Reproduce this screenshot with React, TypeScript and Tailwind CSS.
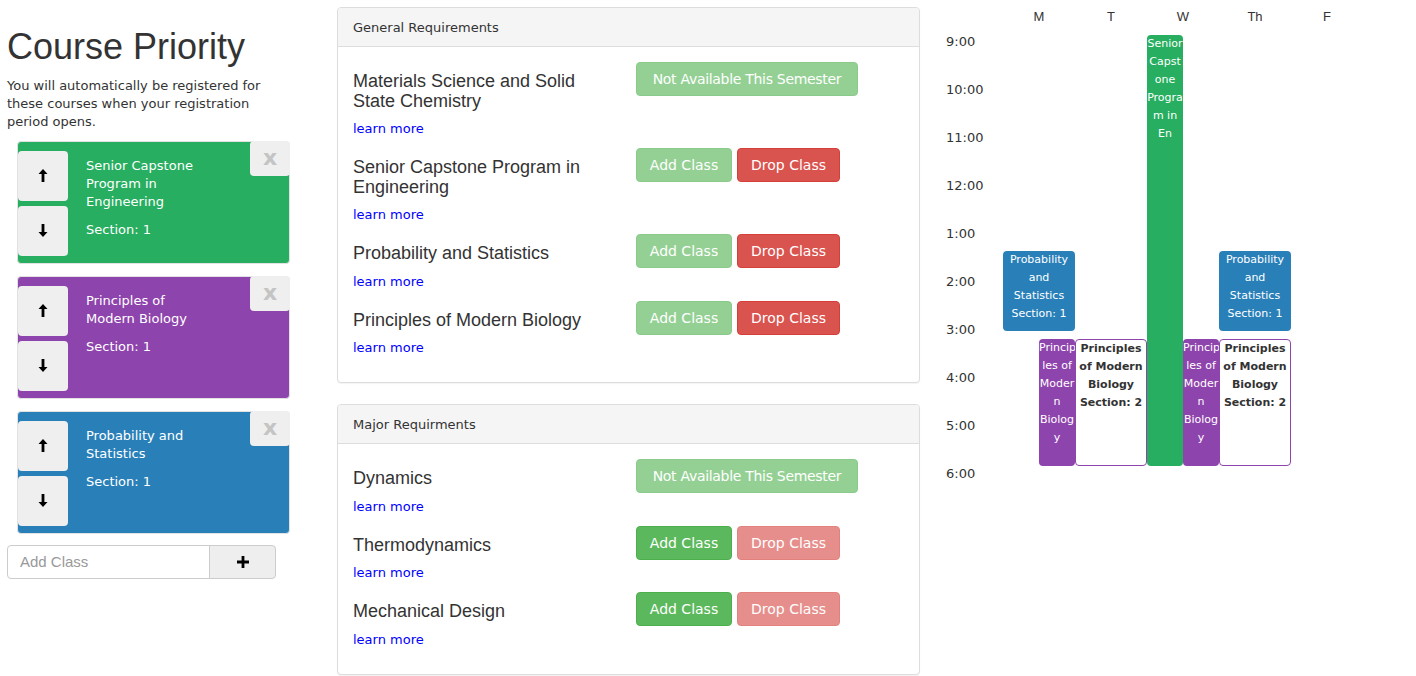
import React from "react";

const verdana = "font-['DejaVu_Sans',Verdana,sans-serif]";
const arial = "font-['Liberation_Sans',Arial,Helvetica,sans-serif]";

function ArrowUp() {
  return (
    <svg width="10" height="13" viewBox="0 0 10 13">
      <path d="M5 0 L9.5 5 H6.4 V13 H3.6 V5 H0.5 Z" fill="#000" />
    </svg>
  );
}

function ArrowDown() {
  return (
    <svg width="10" height="13" viewBox="0 0 10 13">
      <path d="M5 13 L9.5 8 H6.4 V0 H3.6 V8 H0.5 Z" fill="#000" />
    </svg>
  );
}

function PriorityCard({ bg, lines }: { bg: string; lines: string[] }) {
  return (
    <div className={"relative h-[123px] w-[273px] rounded-[4px] border border-[#e2e2e2] " + bg}>
      <div className="flex">
        <div className="flex flex-col gap-[5px] pt-[9px]">
          <button className="flex h-[50px] w-[50px] items-center justify-center rounded-[4px] bg-[#efefef]">
            <ArrowUp />
          </button>
          <button className="flex h-[50px] w-[50px] items-center justify-center rounded-[4px] bg-[#efefef]">
            <ArrowDown />
          </button>
        </div>
        <div className={"ml-[18px] w-[135px] pt-[15px] text-[13px] leading-[18px] text-white " + verdana}>
          <div>
            {lines.map((l) => (
              <div key={l}>{l}</div>
            ))}
          </div>
          <div className="mt-[10px]">Section: 1</div>
        </div>
      </div>
      <button
        className={
          "absolute -right-px -top-px flex h-[35px] w-[40px] items-center justify-center rounded-[4px] bg-[#efefef] text-[22px] font-bold leading-none text-[#c4c4c4] " +
          verdana
        }
      >
        x
      </button>
    </div>
  );
}

type Course = {
  name: string[];
  kind: "na" | "drop" | "add";
};

function Btn({ label, cls, w }: { label: string; cls: string; w: string }) {
  return (
    <button
      className={
        "h-[34px] whitespace-nowrap rounded-[4px] border px-0 text-center text-[14px] leading-[20px] text-white " +
        verdana +
        " " +
        w +
        " " +
        cls
      }
    >
      {label}
    </button>
  );
}

function CourseRow({ c }: { c: Course }) {
  return (
    <div className="flex pb-[10px]">
      <div className="w-[283px]">
        <div className={"pt-[10px] text-[18px] leading-[19.5px] text-[#333] " + arial}>
          {c.name.map((n) => (
            <div key={n}>{n}</div>
          ))}
        </div>
        <div className="mt-[9px] text-[13px] leading-[18px] text-[#0000ff]">learn more</div>
      </div>
      <div className="flex gap-[5px]">
        {c.kind === "na" && (
          <Btn
            label="Not Available This Semester"
            w="w-[222px] tracking-[-0.3px]"
            cls="border-[#4cae4c] bg-[#5cb85c] opacity-65"
          />
        )}
        {c.kind === "drop" && (
          <>
            <Btn label="Add Class" w="w-[96px]" cls="border-[#4cae4c] bg-[#5cb85c] opacity-65" />
            <Btn label="Drop Class" w="w-[103px]" cls="border-[#d43f3a] bg-[#d9534f]" />
          </>
        )}
        {c.kind === "add" && (
          <>
            <Btn label="Add Class" w="w-[96px]" cls="border-[#4cae4c] bg-[#5cb85c]" />
            <Btn label="Drop Class" w="w-[103px]" cls="border-[#d43f3a] bg-[#d9534f] opacity-65" />
          </>
        )}
      </div>
    </div>
  );
}

function Panel({ title, courses, className }: { title: string; courses: Course[]; className?: string }) {
  return (
    <div className={"rounded-[4px] border border-[#ddd] bg-white shadow-[0_1px_1px_rgba(0,0,0,0.05)] " + (className ?? "")}>
      <div className="rounded-t-[3px] border-b border-[#ddd] bg-[#f5f5f5] px-[15px] pb-[9px] pt-[11px] text-[13px] leading-[18px] text-[#333]">
        {title}
      </div>
      <div className="px-[15px] pb-[15px] pt-[15px]">
        {courses.map((c) => (
          <CourseRow key={c.name.join(" ")} c={c} />
        ))}
      </div>
    </div>
  );
}

const general: Course[] = [
  { name: ["Materials Science and Solid", "State Chemistry"], kind: "na" },
  { name: ["Senior Capstone Program in", "Engineering"], kind: "drop" },
  { name: ["Probability and Statistics"], kind: "drop" },
  { name: ["Principles of Modern Biology"], kind: "drop" },
];

const major: Course[] = [
  { name: ["Dynamics"], kind: "na" },
  { name: ["Thermodynamics"], kind: "add" },
  { name: ["Mechanical Design"], kind: "add" },
];

const days = ["M", "T", "W", "Th", "F"];
const hours = ["9:00", "10:00", "11:00", "12:00", "1:00", "2:00", "3:00", "4:00", "5:00", "6:00"];

const events = [
  {
    cls: "left-[144px] top-[2px] h-[431px] w-[36px] bg-[#27ae60] text-white",
    lines: ["Senior", "Capst", "one", "Progra", "m in", "En"],
  },
  {
    cls: "left-0 top-[218px] h-[80px] w-[72px] bg-[#2980b9] text-white",
    lines: ["Probability", "and", "Statistics", "Section: 1"],
  },
  {
    cls: "left-[216px] top-[218px] h-[80px] w-[72px] bg-[#2980b9] text-white",
    lines: ["Probability", "and", "Statistics", "Section: 1"],
  },
  {
    cls: "left-[36px] top-[306px] h-[127px] w-[36px] bg-[#8e44ad] text-white",
    lines: ["Princip", "les of", "Moder", "n", "Biolog", "y"],
  },
  {
    cls: "left-[180px] top-[306px] h-[127px] w-[36px] bg-[#8e44ad] text-white",
    lines: ["Princip", "les of", "Moder", "n", "Biolog", "y"],
  },
  {
    cls: "left-[72px] top-[306px] h-[127px] w-[72px] border border-[#8e44ad] bg-white font-bold text-[#333]",
    lines: ["Principles", "of Modern", "Biology", "Section: 2"],
  },
  {
    cls: "left-[216px] top-[306px] h-[127px] w-[72px] border border-[#8e44ad] bg-white font-bold text-[#333]",
    lines: ["Principles", "of Modern", "Biology", "Section: 2"],
  },
];

function Calendar() {
  return (
    <div className="w-[481px] pt-[8px]">
      <div className={"flex pl-[68px] text-[13px] leading-[18px] text-[#333] " + arial}>
        {days.map((d) => (
          <div key={d} className="w-[72px] text-center">
            {d}
          </div>
        ))}
      </div>
      <div className="mt-[7px] flex">
        <div className="w-[68px] pl-[11px] text-[13px] leading-[18px] text-[#333]">
          {hours.map((h) => (
            <div key={h} className="h-[48px]">
              {h}
            </div>
          ))}
        </div>
        <div className="relative h-[480px] w-[360px]">
          {events.map((e, i) => (
            <div
              key={i}
              className={"absolute overflow-hidden rounded-[4px] text-center text-[11px] leading-[18px] " + e.cls}
            >
              {e.lines.map((l, j) => (
                <div key={j} className="whitespace-nowrap">
                  {l}
                </div>
              ))}
            </div>
          ))}
        </div>
      </div>
    </div>
  );
}

export default function App() {
  return (
    <div className={"flex min-h-[676px] w-[1416px] bg-white text-[#333] " + verdana}>
      {/* priority column */}
      <div className="w-[322px] pl-[7px]">
        <h1 className={"mt-[27px] text-[36px] font-normal leading-[39.6px] text-[#333] " + arial}>Course Priority</h1>
        <p className="mt-[10px] w-[280px] text-[13px] leading-[18px]">
          You will automatically be registered for these courses when your registration period opens.
        </p>
        <div className="ml-[10px] mt-[10px] flex flex-col gap-[12px]">
          <PriorityCard bg="bg-[#27ae60]" lines={["Senior Capstone", "Program in", "Engineering"]} />
          <PriorityCard bg="bg-[#8e44ad]" lines={["Principles of", "Modern Biology"]} />
          <PriorityCard bg="bg-[#2980b9]" lines={["Probability and", "Statistics"]} />
        </div>
        <div className="mt-[11px] flex h-[34px] w-[269px]">
          <input
            placeholder="Add Class"
            className={
              "h-full w-[203px] rounded-l-[4px] border border-[#ccc] px-[12px] text-[15px] text-[#555] outline-none placeholder:text-[#999] " +
              arial
            }
          />
          <button className="-ml-px flex h-full flex-1 items-center justify-center rounded-r-[4px] border border-[#ccc] bg-[#eee]">
            <svg width="12" height="12" viewBox="0 0 12 12">
              <path d="M4.6 0 H7.4 V4.6 H12 V7.4 H7.4 V12 H4.6 V7.4 H0 V4.6 H4.6 Z" fill="#000" />
            </svg>
          </button>
        </div>
      </div>

      {/* requirements column */}
      <div className="w-[613px] px-[15px] pt-[7px]">
        <Panel title="General Requirements" courses={general} />
        <Panel title="Major Requirments" courses={major} className="mt-[21px]" />
      </div>

      {/* schedule */}
      <Calendar />
    </div>
  );
}
